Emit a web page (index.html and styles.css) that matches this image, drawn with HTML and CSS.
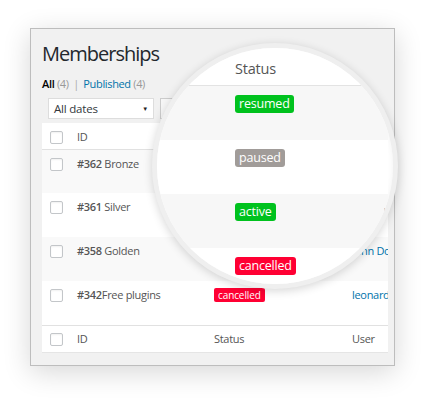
FILE: index.html
```html
<!DOCTYPE html>
<html>
<head>
<meta charset="utf-8">
<link rel="stylesheet" href="styles.css">
</head>
<body>
<div class="stage">
  <div class="panel">
    <h1 class="title">Memberships</h1>
    <div class="subsub">
      <span class="current">All</span> <span class="count">(4)</span>
      <span class="sep">|</span>
      <span class="link">Published</span> <span class="count">(4)</span>
    </div>
    <div class="filters">
      <div class="select"><span>All dates</span><span class="arrow">▼</span></div>
      <div class="btn">Filter</div>
    </div>
    <div class="table">
      <div class="row head">
        <span class="cb"></span><span class="col">ID</span><span class="col">Status</span><span class="col">User</span>
      </div>
      <div class="row alt">
        <span class="cb"></span><span class="col"><b>#362</b> Bronze</span><span class="col"><span class="badge green">resumed</span></span><span class="col user">Mary Smith</span>
      </div>
      <div class="row">
        <span class="cb"></span><span class="col"><b>#361</b> Silver</span><span class="col"><span class="badge gray">paused</span></span><span class="col user">admin</span>
      </div>
      <div class="row alt">
        <span class="cb"></span><span class="col"><b>#358</b> Golden</span><span class="col"><span class="badge green">active</span></span><span class="col user">John Doe</span>
      </div>
      <div class="row">
        <span class="cb"></span><span class="col"><b>#342</b>Free plugins</span><span class="col"><span class="badge red">cancelled</span></span><span class="col user">leonardo</span>
      </div>
      <div class="row foot">
        <span class="cb"></span><span class="col">ID</span><span class="col">Status</span><span class="col">User</span>
      </div>
    </div>
    <div class="magnifier">
      <div class="lens">
        <div class="mrow mhead"><span>Status</span></div>
        <div class="mrow malt"><span class="mbadge green">resumed</span></div>
        <div class="mrow"><span class="mbadge gray">paused</span></div>
        <div class="mrow malt"><span class="mbadge green">active</span><span class="muser">Jo</span></div>
        <div class="mrow"><span class="mbadge red">cancelled</span></div>
      </div>
    </div>
  </div>
</div>
</body>
</html>
```
FILE: styles.css
```css
html, body {
  margin: 0;
  padding: 0;
  background: #ffffff;
}
body {
  font-family: "Open Sans", "Noto Sans", sans-serif;
  color: #555;
  width: 421px;
  height: 400px;
  overflow: hidden;
}
.stage {
  padding: 28px 0 0 30px;
}
.panel {
  position: relative;
  box-sizing: border-box;
  width: 365px;
  height: 338px;
  border: 1px solid #bdbdbd;
  background: #f1f1f1;
  padding: 11px 5px 0 11px;
  box-shadow: 0 6px 26px rgba(0, 0, 0, 0.16);
}
.title {
  margin: 0;
  font-size: 20px;
  line-height: 28px;
  font-weight: 400;
  letter-spacing: -1px;
  color: #23282d;
}
.subsub {
  margin-top: 8px;
  font-size: 11px;
  line-height: 16px;
  letter-spacing: -0.35px;
  color: #999;
}
.subsub .current {
  color: #000;
  font-weight: 600;
}
.subsub .link {
  color: #0073aa;
}
.subsub .sep {
  color: #aaa;
  margin: 0 2px;
}
.filters {
  display: flex;
  gap: 6px;
  margin: 6px 0 0 6px;
}
.select {
  box-sizing: border-box;
  width: 106px;
  height: 21px;
  background: #fff;
  border: 1px solid #ddd;
  display: flex;
  align-items: center;
  justify-content: space-between;
  padding: 0 5px;
  font-size: 11.5px;
  letter-spacing: -0.2px;
  color: #32373c;
}
.select .arrow {
  font-size: 6px;
  color: #222;
}
.btn {
  box-sizing: border-box;
  height: 21px;
  width: 50px;
  background: #f7f7f7;
  border: 1px solid #ccc;
  font-size: 11px;
  line-height: 19px;
  padding-left: 7px;
  color: #555;
}
.table {
  margin-top: 4px;
  width: 346px;
  background: #fff;
  overflow: hidden;
  border-bottom: 1px solid #e5e5e5;
}
.row {
  display: grid;
  grid-template-columns: 35px 137px 138px 60px;
  box-sizing: border-box;
  height: 44px;
  padding-top: 6px;
  font-size: 11px;
  line-height: 16px;
  letter-spacing: -0.3px;
  white-space: nowrap;
  background: #fff;
}
.row.alt {
  background: #f9f9f9;
}
.row.head {
  height: 27px;
  border-bottom: 1px solid #e1e1e1;
}
.row:nth-child(2) {
  height: 43px;
}
.row.foot {
  height: 27px;
  border-top: 1px solid #e1e1e1;
  padding-top: 5px;
}
.row .col {
  color: #555;
}
.row b {
  font-weight: 600;
}
.row .user {
  color: #0073aa;
}
.cb {
  box-sizing: border-box;
  width: 13px;
  height: 13px;
  margin: 2px 0 0 8px;
  border: 1px solid #c3c6c9;
  border-radius: 2px;
  background: #fff;
  box-shadow: inset 0 1px 2px rgba(0, 0, 0, 0.06);
}
.badge {
  display: inline-block;
  color: #fff;
  font-size: 10px;
  line-height: 14px;
  letter-spacing: -0.1px;
  padding: 0 4px;
  border-radius: 2px;
}
.green { background: #00c21e; }
.gray { background: #a19c99; }
.red { background: #ff0033; }
.magnifier {
  position: absolute;
  left: 121px;
  top: 14px;
  box-sizing: border-box;
  width: 246px;
  height: 246px;
  border-radius: 50%;
  border: 5px solid #efefef;
  background: #fff;
  overflow: hidden;
  box-shadow: 0 2px 10px rgba(0, 0, 0, 0.16), inset 0 0 6px rgba(0, 0, 0, 0.06);
}
.lens {
  width: 231px;
  overflow: hidden;
}
.mrow {
  display: flex;
  align-items: flex-start;
  box-sizing: border-box;
  height: 54px;
  padding: 9px 0 0 78px;
  white-space: nowrap;
  background: #fff;
}
.mrow.malt {
  background: #f7f7f7;
}
.mhead {
  height: 38px;
  padding-top: 12px;
  border-bottom: 1px solid #e3e3e3;
  font-size: 14.5px;
  line-height: 18px;
  letter-spacing: -0.2px;
  color: #555;
}
.mbadge {
  display: inline-block;
  color: #fff;
  font-size: 12.5px;
  line-height: 18px;
  letter-spacing: -0.2px;
  padding: 0 4px;
  border-radius: 3px;
}
.muser {
  margin-left: 108px;
  color: #0073aa;
  font-size: 13px;
  line-height: 18px;
}
```
